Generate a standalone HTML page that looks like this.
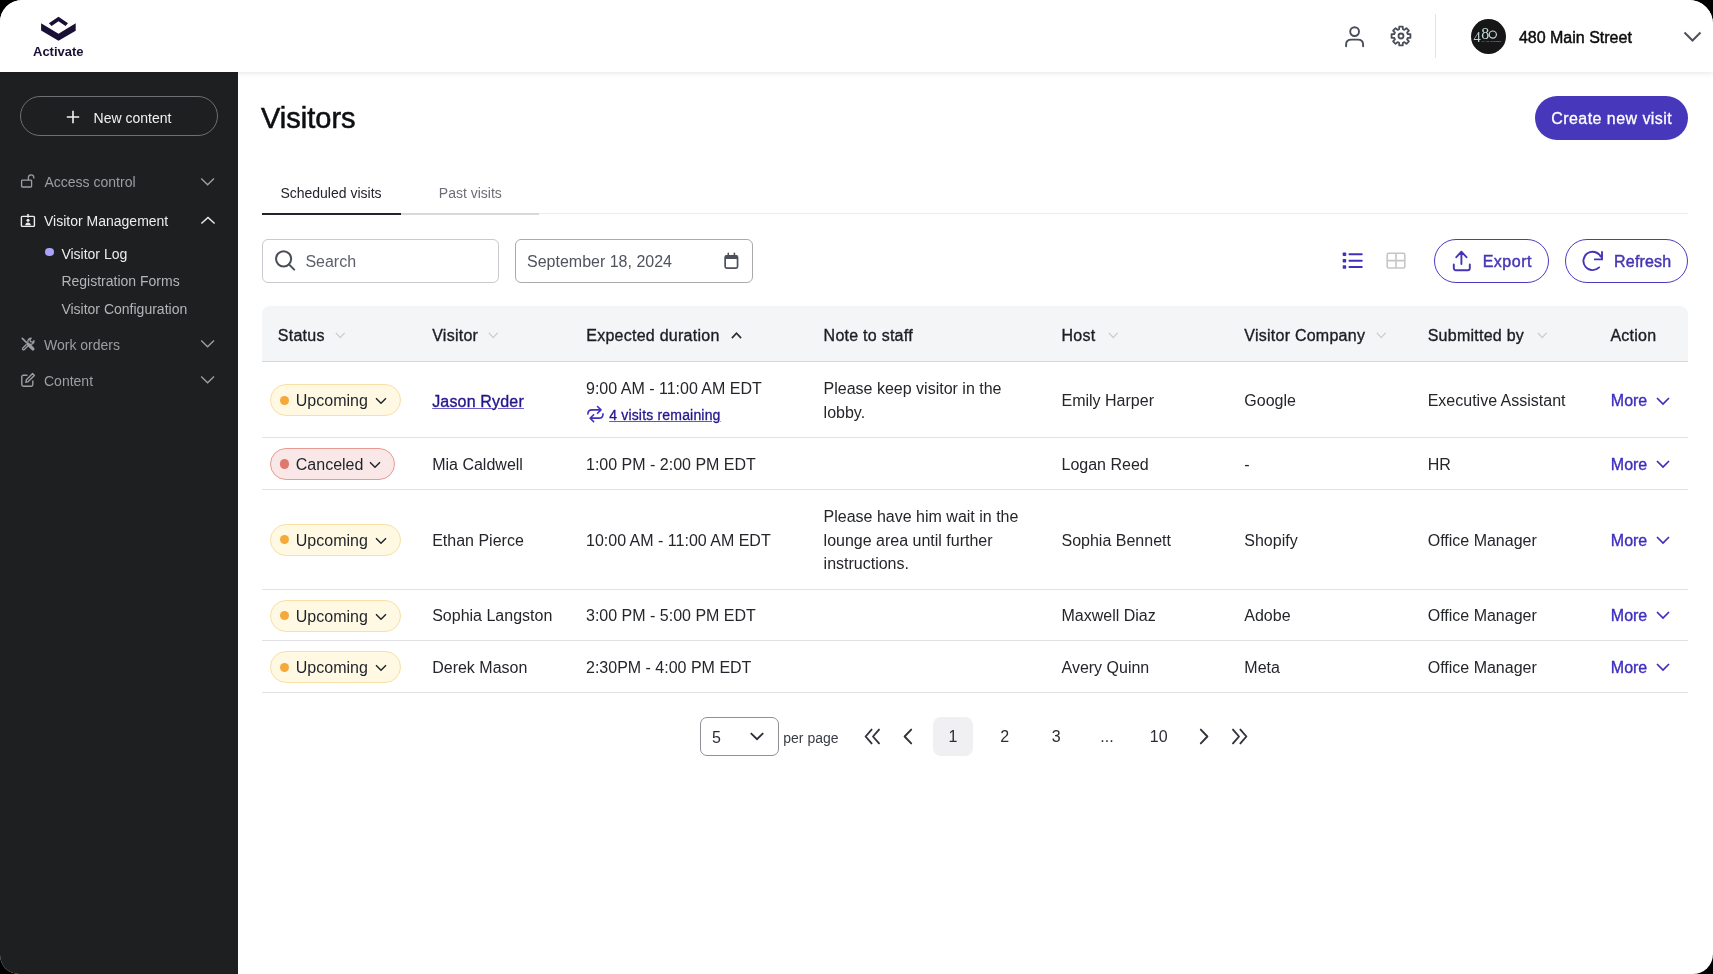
<!DOCTYPE html>
<html><head><meta charset="utf-8">
<style>
*{box-sizing:border-box;margin:0;padding:0}
html,body{width:1713px;height:974px;overflow:hidden;background:#000}
body{font-family:"Liberation Sans",sans-serif;color:#1d2127}
#app{position:absolute;left:0;top:0;width:1713px;height:974px;background:#fff;border-radius:22px 24px 20px 19px;overflow:hidden;will-change:transform}
.a{position:absolute;white-space:nowrap;line-height:1}
#hdr{position:absolute;left:0;top:0;width:1713px;height:72px;background:#fff;z-index:2;box-shadow:0 1px 5px rgba(0,0,0,.10)}
#side{position:absolute;left:0;top:72px;width:238px;height:902px;background:#1e1f21}
.s14{font-size:14px}
.s16{font-size:16px}
.gray{color:#9d9ea2}
svg{position:absolute;overflow:visible}
.th{position:absolute;white-space:nowrap;line-height:1;font-size:16px;color:#1b1e24;-webkit-text-stroke:0.35px #1b1e24;letter-spacing:0.25px;top:328.2px}
.td{position:absolute;white-space:nowrap;line-height:1;font-size:16px;color:#24262b}
.hr{position:absolute;left:262px;width:1426px;height:1px;background:#e1e2e6}
.pill{position:absolute;left:269.6px;height:32px;border-radius:16px;border:1px solid #f8e0a6;background:#fff8e3}
.pill.c{border-color:#e99a92;background:#f9e8e7}
.dot{position:absolute;left:280px;width:9.4px;height:9.4px;border-radius:50%;background:#f6a838}
.dot.c{background:#e0776c}
.more{position:absolute;white-space:nowrap;line-height:1;font-size:16px;color:#3d2ec0;-webkit-text-stroke:0.35px #3d2ec0;left:1610.8px}

</style></head><body>
<div id="app">
  <div id="hdr">
    <!-- logo -->
    <svg style="left:0;top:0" width="100" height="72">
      <polygon fill="#1a1035" points="48.9,23.2 58.5,16.8 68,23.2 65.5,25.9 58.5,21.2 51.6,25.9"/>
      <polygon fill="#1a1035" points="41.1,23.2 58.5,33.7 75.7,23.2 75.7,30.8 58.5,40.7 41.1,30.4"/>
    </svg>
    <div class="a" style="left:33px;top:45.3px;font-size:13px;font-weight:700;color:#1a1035">Activate</div>
    <!-- user icon -->
    <svg style="left:1340px;top:24px" width="30" height="26" viewBox="0 0 30 26">
      <circle cx="14.6" cy="7.6" r="4.4" fill="none" stroke="#4a4e5a" stroke-width="1.9"/>
      <path d="M6.1 22.2V20.6C6.1 17.4 8.4 15.6 11.4 15.6H17.8C20.8 15.6 23.1 17.4 23.1 20.6V22.2" fill="none" stroke="#4a4e5a" stroke-width="1.9" stroke-linecap="round"/>
    </svg>
    <!-- gear icon -->
    <svg style="left:1388.5px;top:24.2px" width="24" height="24" viewBox="0 0 24 24">
      <path fill="none" stroke="#4a4e5a" stroke-width="1.8" stroke-linejoin="round" d="M9.32 5.53 L10.13 5.25 L10.25 2.56 L13.75 2.56 L13.87 5.25 L14.68 5.53 L15.45 5.91 L17.44 4.09 L19.91 6.56 L18.09 8.55 L18.47 9.32 L18.75 10.13 L21.44 10.25 L21.44 13.75 L18.75 13.87 L18.47 14.68 L18.09 15.45 L19.91 17.44 L17.44 19.91 L15.45 18.09 L14.68 18.47 L13.87 18.75 L13.75 21.44 L10.25 21.44 L10.13 18.75 L9.32 18.47 L8.55 18.09 L6.56 19.91 L4.09 17.44 L5.91 15.45 L5.53 14.68 L5.25 13.87 L2.56 13.75 L2.56 10.25 L5.25 10.13 L5.53 9.32 L5.91 8.55 L4.09 6.56 L6.56 4.09 L8.55 5.91Z"/>
      <circle cx="12" cy="12" r="2.5" fill="none" stroke="#4a4e5a" stroke-width="1.8"/>
    </svg>
    <div style="position:absolute;left:1434.5px;top:14px;width:1px;height:44px;background:#e2e3e5"></div>
    <!-- avatar -->
    <div style="position:absolute;left:1470.5px;top:18.7px;width:35.5px;height:35.5px;border-radius:50%;background:#161616"></div>
    <svg style="left:1470px;top:18.4px" width="36" height="36" viewBox="0 0 36 36">
      <text x="3.4" y="23.7" font-family="Liberation Serif" font-size="14.5" fill="#b9d0d2">4</text>
      <text x="11.3" y="20.5" font-family="Liberation Serif" font-size="16" fill="#c3dadc">8</text>
      <ellipse cx="22.8" cy="16.6" rx="3.6" ry="3.6" fill="none" stroke="#c3dadc" stroke-width="1.2"/>
      <text x="11.8" y="23.9" font-family="Liberation Sans" font-size="2.5" fill="#9fb2b4" letter-spacing="0.3">MAIN STREET</text>
    </svg>
    <div class="a s16" style="left:1518.9px;top:30.2px;color:#0c0c0e;-webkit-text-stroke:0.45px #0c0c0e">480 Main Street</div>
    <svg style="left:1680px;top:28.8px" width="26" height="18" viewBox="0 0 26 18">
      <path d="M4.5 3.5 L12.5 11.5 L20.5 3.5" fill="none" stroke="#4d515c" stroke-width="2"/>
    </svg>

  </div>
  <div id="side">
    <div style="position:absolute;left:20px;top:24px;width:198px;height:40px;border:1px solid #6e6f73;border-radius:20px"></div>
    <svg style="left:66px;top:38px" width="14" height="14" viewBox="0 0 14 14"><path d="M7 0.8V13.2M0.8 7H13.2" stroke="#f2f2f2" stroke-width="1.6"/></svg>
    <div class="a s14" style="left:93.6px;top:38.5px;color:#f2f2f2">New content</div>

    <!-- access control -->
    <svg style="left:20px;top:101px" width="16" height="16" viewBox="0 0 16 16">
      <rect x="1.6" y="7.2" width="10" height="6.8" rx="0.8" fill="none" stroke="#9d9ea2" stroke-width="1.3"/>
      <path d="M8.4 7.2V4.6A2.7 2.7 0 0 1 13.8 4.6V5.6" fill="none" stroke="#9d9ea2" stroke-width="1.3"/>
    </svg>
    <div class="a s14 gray" style="left:44.5px;top:103.3px">Access control</div>
    <svg style="left:199px;top:104px" width="18" height="12" viewBox="0 0 18 12"><path d="M2.2 2.6L8.6 8.8L15 2.6" fill="none" stroke="#9d9ea2" stroke-width="1.4"/></svg>

    <!-- visitor management -->
    <svg style="left:20px;top:141px" width="16" height="16" viewBox="0 0 16 16">
      <rect x="1.4" y="3.4" width="13" height="10" rx="0.8" fill="none" stroke="#ededed" stroke-width="1.4"/>
      <circle cx="8" cy="7.2" r="1.5" fill="#ededed"/>
      <path d="M5.2 12.2C5.4 10.2 6.5 9.4 8 9.4C9.5 9.4 10.6 10.2 10.8 12.2Z" fill="#ededed"/>
      <rect x="7.2" y="1" width="1.6" height="3.6" fill="#ededed"/>
    </svg>
    <div class="a s14" style="left:44px;top:142.4px;color:#ededed">Visitor Management</div>
    <svg style="left:199px;top:142px" width="18" height="12" viewBox="0 0 18 12"><path d="M2.4 9.6L9 3.4L15.6 9.6" fill="none" stroke="#ededed" stroke-width="1.4"/></svg>

    <div style="position:absolute;left:45.4px;top:175.8px;width:8.4px;height:8.4px;border-radius:50%;background:#aaa2f7"></div>
    <div class="a s14" style="left:61.4px;top:174.6px;color:#ededed">Visitor Log</div>
    <div class="a s14" style="left:61.4px;top:202.2px;color:#b4b5b8">Registration Forms</div>
    <div class="a s14" style="left:61.4px;top:229.9px;color:#b4b5b8">Visitor Configuration</div>

    <!-- work orders -->
    <svg style="left:20px;top:264px" width="16" height="16" viewBox="0 0 16 16">
      <path d="M2.3 2.3L8 8" stroke="#9d9ea2" stroke-width="1.7" stroke-linecap="round"/>
      <path d="M8.6 8.6L12.9 12.9" stroke="#9d9ea2" stroke-width="3.3" stroke-linecap="round"/>
      <path d="M6.6 8.2L2.6 12.2A1.1 1.1 0 0 0 4.1 13.7L8.1 9.7" fill="none" stroke="#9d9ea2" stroke-width="1.25" stroke-linejoin="round"/>
      <path d="M8.2 6.8A3.2 3.2 0 0 1 11.2 2.1L9.9 3.8L10.6 5.7L12.4 6.2L14 4.8A3.2 3.2 0 0 1 9.4 8" fill="none" stroke="#9d9ea2" stroke-width="1.3" stroke-linejoin="round"/>
    </svg>
    <div class="a s14 gray" style="left:44px;top:265.9px">Work orders</div>
    <svg style="left:199px;top:266px" width="18" height="12" viewBox="0 0 18 12"><path d="M2.2 2.6L8.6 8.8L15 2.6" fill="none" stroke="#9d9ea2" stroke-width="1.4"/></svg>

    <!-- content -->
    <svg style="left:20px;top:300px" width="16" height="16" viewBox="0 0 16 16">
      <path d="M7.4 3.2H3.4A1.6 1.6 0 0 0 1.8 4.8V12.6A1.6 1.6 0 0 0 3.4 14.2H11.2A1.6 1.6 0 0 0 12.8 12.6V8.6" fill="none" stroke="#9d9ea2" stroke-width="1.4"/>
      <path d="M12.6 1.6L14.4 3.4L8.2 9.6L5.8 10.2L6.4 7.8Z" fill="none" stroke="#9d9ea2" stroke-width="1.4" stroke-linejoin="round"/>
    </svg>
    <div class="a s14 gray" style="left:44px;top:301.8px">Content</div>
    <svg style="left:199px;top:302px" width="18" height="12" viewBox="0 0 18 12"><path d="M2.2 2.6L8.6 8.8L15 2.6" fill="none" stroke="#9d9ea2" stroke-width="1.4"/></svg>
  </div>
  <div id="main">
    <div class="a" style="left:261px;top:104.3px;font-size:29px;color:#0d0f12;-webkit-text-stroke:0.55px #0d0f12">Visitors</div>
    <div style="position:absolute;left:1535px;top:96px;width:153px;height:44px;border-radius:22px;background:#4737ba"></div>
    <div class="a s16" style="left:1551.2px;top:104.6px;color:#fff;line-height:28px;letter-spacing:0.45px;-webkit-text-stroke:0.3px #fff">Create new visit</div>

    <!-- tabs -->
    <div style="position:absolute;left:262px;top:213px;width:1426px;height:1px;background:#ececee"></div>
    <div style="position:absolute;left:400px;top:212.6px;width:139px;height:2px;background:#d9d9dc"></div>
    <div style="position:absolute;left:262px;top:212.6px;width:138.5px;height:2.4px;background:#22242c"></div>
    <div class="a s14" style="left:280.4px;top:185.6px;color:#22242c">Scheduled visits</div>
    <div class="a s14 " style="left:438.8px;top:185.6px;color:#6b6e76">Past visits</div>

    <!-- search -->
    <div style="position:absolute;left:262px;top:239px;width:237px;height:44px;border:1px solid #c9cacf;border-radius:6px"></div>
    <svg style="left:274px;top:249.3px" width="23" height="23" viewBox="0 0 23 23">
      <circle cx="9.6" cy="9.8" r="7.6" fill="none" stroke="#4a4e59" stroke-width="2"/>
      <path d="M15 15.4L20.2 20.6" stroke="#4a4e59" stroke-width="2" stroke-linecap="round"/>
    </svg>
    <div class="a s16" style="left:305.4px;top:253.7px;color:#5c6069">Search</div>

    <!-- date -->
    <div style="position:absolute;left:515px;top:239px;width:238px;height:44px;border:1px solid #a9aaae;border-radius:6px"></div>
    <div class="a s16" style="left:527px;top:254px;color:#4f535c">September 18, 2024</div>
    <svg style="left:722px;top:252px" width="19" height="20" viewBox="0 0 19 20">
      <rect x="3.15" y="3.85" width="12.4" height="12.2" rx="1.5" fill="none" stroke="#4d515c" stroke-width="1.7"/>
      <rect x="3.15" y="3.5" width="12.4" height="3.4" rx="0.6" fill="#4d515c"/>
      <path d="M6.3 1.3V3.8M12.4 1.3V3.8" stroke="#4d515c" stroke-width="1.6" stroke-linecap="round"/>
    </svg>

    <!-- view toggles -->
    <svg style="left:1340px;top:250px" width="26" height="22" viewBox="0 0 26 22">
      <rect x="2.7" y="2.55" width="3.5" height="3.5" rx="0.7" fill="#4030bd"/>
      <rect x="2.7" y="8.95" width="3.5" height="3.5" rx="0.7" fill="#4030bd"/>
      <rect x="2.7" y="15.25" width="3.5" height="3.5" rx="0.7" fill="#4030bd"/>
      <path d="M9.4 4.3H21.8M9.4 10.7H21.8M9.4 17H21.8" stroke="#4030bd" stroke-width="1.9" stroke-linecap="round"/>
    </svg>
    <svg style="left:1384px;top:249px" width="24" height="22" viewBox="0 0 24 22">
      <rect x="3.2" y="4.3" width="17.6" height="14.7" rx="1.4" fill="none" stroke="#c6c6c8" stroke-width="1.6"/>
      <path d="M12 4.3V19M3.2 11.65H20.8" stroke="#c6c6c8" stroke-width="1.6"/>
    </svg>

    <!-- export -->
    <div style="position:absolute;left:1434px;top:239px;width:115px;height:44px;border:1px solid #4a3bc0;border-radius:22px"></div>
    <svg style="left:1450px;top:249px" width="24" height="24" viewBox="0 0 24 24">
      <path d="M3.8 15.4V19.3A1.9 1.9 0 0 0 5.7 21.2H17.9A1.9 1.9 0 0 0 19.8 19.3V15.4" fill="none" stroke="#4535b5" stroke-width="1.9" stroke-linecap="round"/>
      <path d="M11.4 15V3M6.3 8.2L11.4 2.7L16.5 8.2" fill="none" stroke="#4535b5" stroke-width="1.9" stroke-linecap="round" stroke-linejoin="round"/>
    </svg>
    <div class="a s16" style="left:1482.7px;top:253.5px;color:#4535b5;letter-spacing:0.5px;-webkit-text-stroke:0.45px #4535b5">Export</div>

    <!-- refresh -->
    <div style="position:absolute;left:1565px;top:239px;width:123px;height:44px;border:1px solid #4a3bc0;border-radius:22px"></div>
    <svg style="left:1580px;top:249px" width="25" height="24" viewBox="0 0 25 24">
      <path d="M20.72 7.58A9.2 9.2 0 1 0 19.11 18.41" fill="none" stroke="#4535b5" stroke-width="1.9" stroke-linecap="round"/>
      <path d="M22 3V10.4H14.8" fill="none" stroke="#4535b5" stroke-width="1.9" stroke-linecap="round" stroke-linejoin="miter"/>
    </svg>
    <div class="a s16" style="left:1614.1px;top:253.5px;color:#4535b5;letter-spacing:0.18px;-webkit-text-stroke:0.45px #4535b5">Refresh</div>
    <!-- table -->
    <div style="position:absolute;left:262px;top:306px;width:1426px;height:55px;background:#f4f5f7;border-radius:8px 8px 0 0"></div>
    <div style="position:absolute;left:262px;top:360.5px;width:1426px;height:1.5px;background:#d5d7dc"></div>
    <div class="th" style="left:277.8px">Status</div>
    <div class="th" style="left:432.2px">Visitor</div>
    <div class="th" style="left:586.3px">Expected duration</div>
    <div class="th" style="left:823.6px">Note to staff</div>
    <div class="th" style="left:1061.5px">Host</div>
    <div class="th" style="left:1244.3px">Visitor Company</div>
    <div class="th" style="left:1427.7px">Submitted by</div>
    <div class="th" style="left:1610.4px">Action</div>
    <svg style="left:335px;top:332px" width="10.5" height="6.5" viewBox="0 0 10.5 6.5"><path d="M0.8500000000000001 0.8500000000000001L5.25 5.6499999999999995L9.65 0.8500000000000001" fill="none" stroke="#c9cbd0" stroke-width="1.3"/></svg>
    <svg style="left:488px;top:332px" width="10.5" height="6.5" viewBox="0 0 10.5 6.5"><path d="M0.8500000000000001 0.8500000000000001L5.25 5.6499999999999995L9.65 0.8500000000000001" fill="none" stroke="#c9cbd0" stroke-width="1.3"/></svg>
    <svg style="left:1107.7px;top:332px" width="10.5" height="6.5" viewBox="0 0 10.5 6.5"><path d="M0.8500000000000001 0.8500000000000001L5.25 5.6499999999999995L9.65 0.8500000000000001" fill="none" stroke="#c9cbd0" stroke-width="1.3"/></svg>
    <svg style="left:1376px;top:332px" width="10.5" height="6.5" viewBox="0 0 10.5 6.5"><path d="M0.8500000000000001 0.8500000000000001L5.25 5.6499999999999995L9.65 0.8500000000000001" fill="none" stroke="#c9cbd0" stroke-width="1.3"/></svg>
    <svg style="left:1537px;top:332px" width="10.5" height="6.5" viewBox="0 0 10.5 6.5"><path d="M0.8500000000000001 0.8500000000000001L5.25 5.6499999999999995L9.65 0.8500000000000001" fill="none" stroke="#c9cbd0" stroke-width="1.3"/></svg>
    <svg style="left:731px;top:332px" width="11" height="7" viewBox="0 0 11 7"><path d="M0.9 6.1L5.5 1.2L10.1 6.1" fill="none" stroke="#2a2d35" stroke-width="1.7"/></svg>
    <div class="hr" style="top:437px"></div>
    <div class="hr" style="top:489px"></div>
    <div class="hr" style="top:588.5px"></div>
    <div class="hr" style="top:640px"></div>
    <div class="hr" style="top:691.5px"></div>
    <div class="pill" style="top:384.3px;width:131.4px"></div><div class="dot" style="top:395.60px"></div><div class="td" style="left:295.8px;top:393.20px;color:#1f2228">Upcoming</div><svg style="left:375.2px;top:397.20px" width="12" height="8" viewBox="0 0 12 8"><path d="M1 1.2L6 6.2L11 1.2" fill="none" stroke="#22252c" stroke-width="1.45"/></svg>
    <div class="td" style="left:432.2px;top:393.66px;color:#23168c;-webkit-text-stroke:0.35px #23168c;letter-spacing:0.17px;text-decoration:underline;text-underline-offset:1px;text-decoration-color:#6b5fcc">Jason Ryder</div>
    <div class="td" style="left:586px;top:381.36px;">9:00 AM - 11:00 AM EDT</div>
    <svg style="left:585px;top:405px" width="21" height="18" viewBox="0 0 21 18">
<path d="M2.9 9.1C2.9 6.5 4.5 4.9 7 4.9H16M12.5 1.5L16 4.9L12.5 8.3" fill="none" stroke="#4030bd" stroke-width="1.6" stroke-linecap="round" stroke-linejoin="round"/>
<path d="M18 8.9C18 11.4 16.5 13.1 14.1 13.1H5.2M8.6 9.7L5.1 13.2L8.6 16.6" fill="none" stroke="#4030bd" stroke-width="1.6" stroke-linecap="round" stroke-linejoin="round"/>
</svg>
    <div class="td" style="left:609.2px;top:408.15px;font-size:14px;color:#23168c;-webkit-text-stroke:0.3px #23168c;letter-spacing:0.18px;text-decoration:underline;text-underline-offset:0.5px;text-decoration-color:#6456c4">4 visits remaining</div>
    <div class="td" style="left:823.6px;top:381.36px;">Please keep visitor in the</div>
    <div class="td" style="left:823.6px;top:404.86px;">lobby.</div>
    <div class="td" style="left:1061.5px;top:393.46px;">Emily Harper</div>
    <div class="td" style="left:1244.3px;top:393.46px;">Google</div>
    <div class="td" style="left:1427.7px;top:393.46px;">Executive Assistant</div>
    <div class="more" style="top:393.46px">More</div><svg style="left:1655.8px;top:396.50px" width="14" height="8" viewBox="0 0 14 8"><path d="M1 1L7 7L13 1" fill="none" stroke="#3d2ec0" stroke-width="1.7"/></svg>
    <div class="pill c" style="top:448px;width:125.2px"></div><div class="dot c" style="top:459.30px"></div><div class="td" style="left:295.8px;top:456.90px;color:#1f2228">Canceled</div><svg style="left:368.6px;top:460.90px" width="12" height="8" viewBox="0 0 12 8"><path d="M1 1.2L6 6.2L11 1.2" fill="none" stroke="#22252c" stroke-width="1.45"/></svg>
    <div class="td" style="left:432.2px;top:457.26px;">Mia Caldwell</div>
    <div class="td" style="left:586px;top:457.26px;">1:00 PM - 2:00 PM EDT</div>
    <div class="td" style="left:1061.5px;top:457.26px;">Logan Reed</div>
    <div class="td" style="left:1244.3px;top:457.26px;">-</div>
    <div class="td" style="left:1427.7px;top:457.26px;">HR</div>
    <div class="more" style="top:457.26px">More</div><svg style="left:1655.8px;top:460.30px" width="14" height="8" viewBox="0 0 14 8"><path d="M1 1L7 7L13 1" fill="none" stroke="#3d2ec0" stroke-width="1.7"/></svg>
    <div class="pill" style="top:523.8px;width:131.4px"></div><div class="dot" style="top:535.10px"></div><div class="td" style="left:295.8px;top:532.70px;color:#1f2228">Upcoming</div><svg style="left:375.2px;top:536.70px" width="12" height="8" viewBox="0 0 12 8"><path d="M1 1.2L6 6.2L11 1.2" fill="none" stroke="#22252c" stroke-width="1.45"/></svg>
    <div class="td" style="left:432.2px;top:532.66px;">Ethan Pierce</div>
    <div class="td" style="left:586px;top:532.66px;">10:00 AM - 11:00 AM EDT</div>
    <div class="td" style="left:1061.5px;top:532.66px;">Sophia Bennett</div>
    <div class="td" style="left:1244.3px;top:532.66px;">Shopify</div>
    <div class="td" style="left:1427.7px;top:532.66px;">Office Manager</div>
    <div class="td" style="left:823.6px;top:508.66px;">Please have him wait in the</div>
    <div class="td" style="left:823.6px;top:532.66px;">lounge area until further</div>
    <div class="td" style="left:823.6px;top:556.46px;">instructions.</div>
    <div class="more" style="top:532.66px">More</div><svg style="left:1655.8px;top:535.70px" width="14" height="8" viewBox="0 0 14 8"><path d="M1 1L7 7L13 1" fill="none" stroke="#3d2ec0" stroke-width="1.7"/></svg>
    <div class="pill" style="top:599.6px;width:131.4px"></div><div class="dot" style="top:610.90px"></div><div class="td" style="left:295.8px;top:608.50px;color:#1f2228">Upcoming</div><svg style="left:375.2px;top:612.50px" width="12" height="8" viewBox="0 0 12 8"><path d="M1 1.2L6 6.2L11 1.2" fill="none" stroke="#22252c" stroke-width="1.45"/></svg>
    <div class="td" style="left:432.2px;top:608.26px;">Sophia Langston</div>
    <div class="td" style="left:586px;top:608.26px;">3:00 PM - 5:00 PM EDT</div>
    <div class="td" style="left:1061.5px;top:608.26px;">Maxwell Diaz</div>
    <div class="td" style="left:1244.3px;top:608.26px;">Adobe</div>
    <div class="td" style="left:1427.7px;top:608.26px;">Office Manager</div>
    <div class="more" style="top:608.26px">More</div><svg style="left:1655.8px;top:611.30px" width="14" height="8" viewBox="0 0 14 8"><path d="M1 1L7 7L13 1" fill="none" stroke="#3d2ec0" stroke-width="1.7"/></svg>
    <div class="pill" style="top:651.2px;width:131.4px"></div><div class="dot" style="top:662.50px"></div><div class="td" style="left:295.8px;top:660.10px;color:#1f2228">Upcoming</div><svg style="left:375.2px;top:664.10px" width="12" height="8" viewBox="0 0 12 8"><path d="M1 1.2L6 6.2L11 1.2" fill="none" stroke="#22252c" stroke-width="1.45"/></svg>
    <div class="td" style="left:432.2px;top:660.26px;">Derek Mason</div>
    <div class="td" style="left:586px;top:660.26px;">2:30PM - 4:00 PM EDT</div>
    <div class="td" style="left:1061.5px;top:660.26px;">Avery Quinn</div>
    <div class="td" style="left:1244.3px;top:660.26px;">Meta</div>
    <div class="td" style="left:1427.7px;top:660.26px;">Office Manager</div>
    <div class="more" style="top:660.26px">More</div><svg style="left:1655.8px;top:663.30px" width="14" height="8" viewBox="0 0 14 8"><path d="M1 1L7 7L13 1" fill="none" stroke="#3d2ec0" stroke-width="1.7"/></svg>
    <!-- pagination -->
    <div style="position:absolute;left:700px;top:717px;width:78.5px;height:39px;border:1px solid #8f9197;border-radius:7px"></div>
    <div class="td" style="left:712px;top:729.96px;color:#2a2d35">5</div>
    <svg style="left:749px;top:731px" width="16" height="11" viewBox="0 0 16 11"><path d="M1.8 2.2L8 8.2L14.2 2.2" fill="none" stroke="#2a2d35" stroke-width="1.8"/></svg>
    <div class="td" style="left:783.3px;top:730.85px;font-size:14px;color:#3a3d45">per page</div>
    <svg style="left:862px;top:727px" width="20" height="19" viewBox="0 0 20 19"><path d="M9.6 2.6L3.6 9.5L9.6 16.4M17 2.6L11 9.5L17 16.4" fill="none" stroke="#31343c" stroke-width="1.9" stroke-linecap="round" stroke-linejoin="round"/></svg>
    <svg style="left:900px;top:727px" width="15" height="19" viewBox="0 0 15 19"><path d="M11.2 2.6L4.6 9.5L11.2 16.4" fill="none" stroke="#31343c" stroke-width="1.9" stroke-linecap="round" stroke-linejoin="round"/></svg>
    <div style="position:absolute;left:933px;top:717px;width:40px;height:39px;border-radius:8px;background:#f0f0f2"></div>
    <div class="td" style="left:923px;width:60px;text-align:center;top:728.66px;color:#2a2d35">1</div>
    <div class="td" style="left:974.6px;width:60px;text-align:center;top:728.66px;color:#2a2d35">2</div>
    <div class="td" style="left:1026.2px;width:60px;text-align:center;top:728.66px;color:#2a2d35">3</div>
    <div class="td" style="left:1077px;width:60px;text-align:center;top:728.66px;color:#2a2d35">...</div>
    <div class="td" style="left:1128.7px;width:60px;text-align:center;top:728.66px;color:#2a2d35">10</div>
    <svg style="left:1197px;top:727px" width="15" height="19" viewBox="0 0 15 19"><path d="M3.8 2.6L10.4 9.5L3.8 16.4" fill="none" stroke="#31343c" stroke-width="1.9" stroke-linecap="round" stroke-linejoin="round"/></svg>
    <svg style="left:1230px;top:727px" width="20" height="19" viewBox="0 0 20 19"><path d="M3 2.6L9 9.5L3 16.4M10.4 2.6L16.4 9.5L10.4 16.4" fill="none" stroke="#31343c" stroke-width="1.9" stroke-linecap="round" stroke-linejoin="round"/></svg>
  </div>
</div>
</body></html>
